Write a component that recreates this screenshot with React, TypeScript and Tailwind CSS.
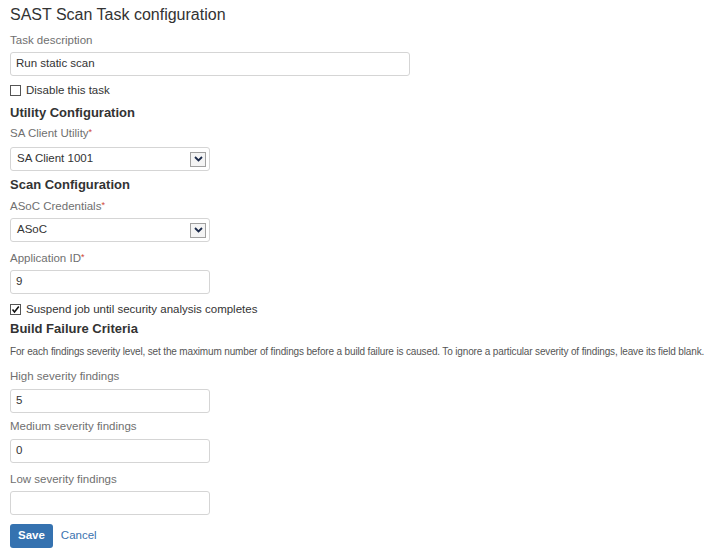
import React from "react";

const Req = () => <span className="text-[#d04437] text-[9px] align-top relative -top-[1px]">*</span>;

const Label = ({ children }: { children: React.ReactNode }) => (
  <div className="text-[11.5px] leading-[14px] text-[#707070]">{children}</div>
);

const TextBox = ({ value, wide }: { value: string; wide?: boolean }) => (
  <div
    className={`${wide ? "w-[400px]" : "w-[200px]"} h-[24px] border border-[#d5d5d5] rounded-[3px] px-[5px] flex items-center text-[11.5px] text-[#333]`}
  >
    {value}
  </div>
);

const Select = ({ value }: { value: string }) => (
  <div className="w-[200px] h-[24px] border border-[#d5d5d5] rounded-[3px] pl-[6px] pr-[3px] flex items-center justify-between text-[11.5px] text-[#333]">
    <span>{value}</span>
    <span className="w-[16px] h-[15px] border border-[#a0a0a0] bg-[#f4f4f4] flex items-center justify-center">
      <svg width="9" height="6" viewBox="0 0 9 6">
        <path d="M1 1 L4.5 4.5 L8 1" stroke="#1b2a4a" strokeWidth="1.8" fill="none" />
      </svg>
    </span>
  </div>
);

const Check = ({ checked, label }: { checked?: boolean; label: string }) => (
  <div className="flex items-center gap-[5px] text-[11.5px] leading-[14px] text-[#333]">
    <span className="w-[11px] h-[11px] border border-[#555] bg-white flex items-center justify-center">
      {checked && (
        <svg width="9" height="9" viewBox="0 0 9 9">
          <path d="M1.5 4.5 L3.5 7 L7.8 1.5" stroke="#111" strokeWidth="1.6" fill="none" />
        </svg>
      )}
    </span>
    <span>{label}</span>
  </div>
);

const Heading = ({ children }: { children: React.ReactNode }) => (
  <div className="text-[13px] leading-[16px] font-bold text-[#333]">{children}</div>
);

export default function App() {
  return (
    <div
      className="w-[716px] h-[558px] bg-white px-[10px] pt-[5px] flex flex-col"
      style={{ fontFamily: '"Liberation Sans", Arial, sans-serif' }}
    >
      <h1 className="text-[16px] leading-[20px] text-[#333]">SAST Scan Task configuration</h1>
      <div className="mt-[8px]"><Label>Task description</Label></div>
      <div className="mt-[5px]"><TextBox value="Run static scan" wide /></div>
      <div className="mt-[7px]"><Check label="Disable this task" /></div>
      <div className="mt-[8px]"><Heading>Utility Configuration</Heading></div>
      <div className="mt-[5px]"><Label>SA Client Utility<Req /></Label></div>
      <div className="mt-[7px]"><Select value="SA Client 1001" /></div>
      <div className="mt-[6px]"><Heading>Scan Configuration</Heading></div>
      <div className="mt-[6px]"><Label>ASoC Credentials<Req /></Label></div>
      <div className="mt-[5px]"><Select value="ASoC" /></div>
      <div className="mt-[9px]"><Label>Application ID<Req /></Label></div>
      <div className="mt-[5px]"><TextBox value="9" /></div>
      <div className="mt-[8px]"><Check checked label="Suspend job until security analysis completes" /></div>
      <div className="mt-[5px]"><Heading>Build Failure Criteria</Heading></div>
      <p className="mt-[9px] text-[10px] leading-[12px] text-[#555] tracking-[-0.15px] whitespace-nowrap">
        For each findings severity level, set the maximum number of findings before a build failure is caused. To ignore a particular severity of findings, leave its field blank.
      </p>
      <div className="mt-[11px]"><Label>High severity findings</Label></div>
      <div className="mt-[6px]"><TextBox value="5" /></div>
      <div className="mt-[6px]"><Label>Medium severity findings</Label></div>
      <div className="mt-[6px]"><TextBox value="0" /></div>
      <div className="mt-[9px]"><Label>Low severity findings</Label></div>
      <div className="mt-[5px]"><TextBox value="" /></div>
      <div className="mt-[9px] flex items-center gap-[8px]">
        <button className="h-[24px] px-[8px] rounded-[3px] bg-[#3572b0] text-white text-[11.5px] font-bold">Save</button>
        <span className="text-[11.5px] text-[#3b73af]">Cancel</span>
      </div>
    </div>
  );
}
